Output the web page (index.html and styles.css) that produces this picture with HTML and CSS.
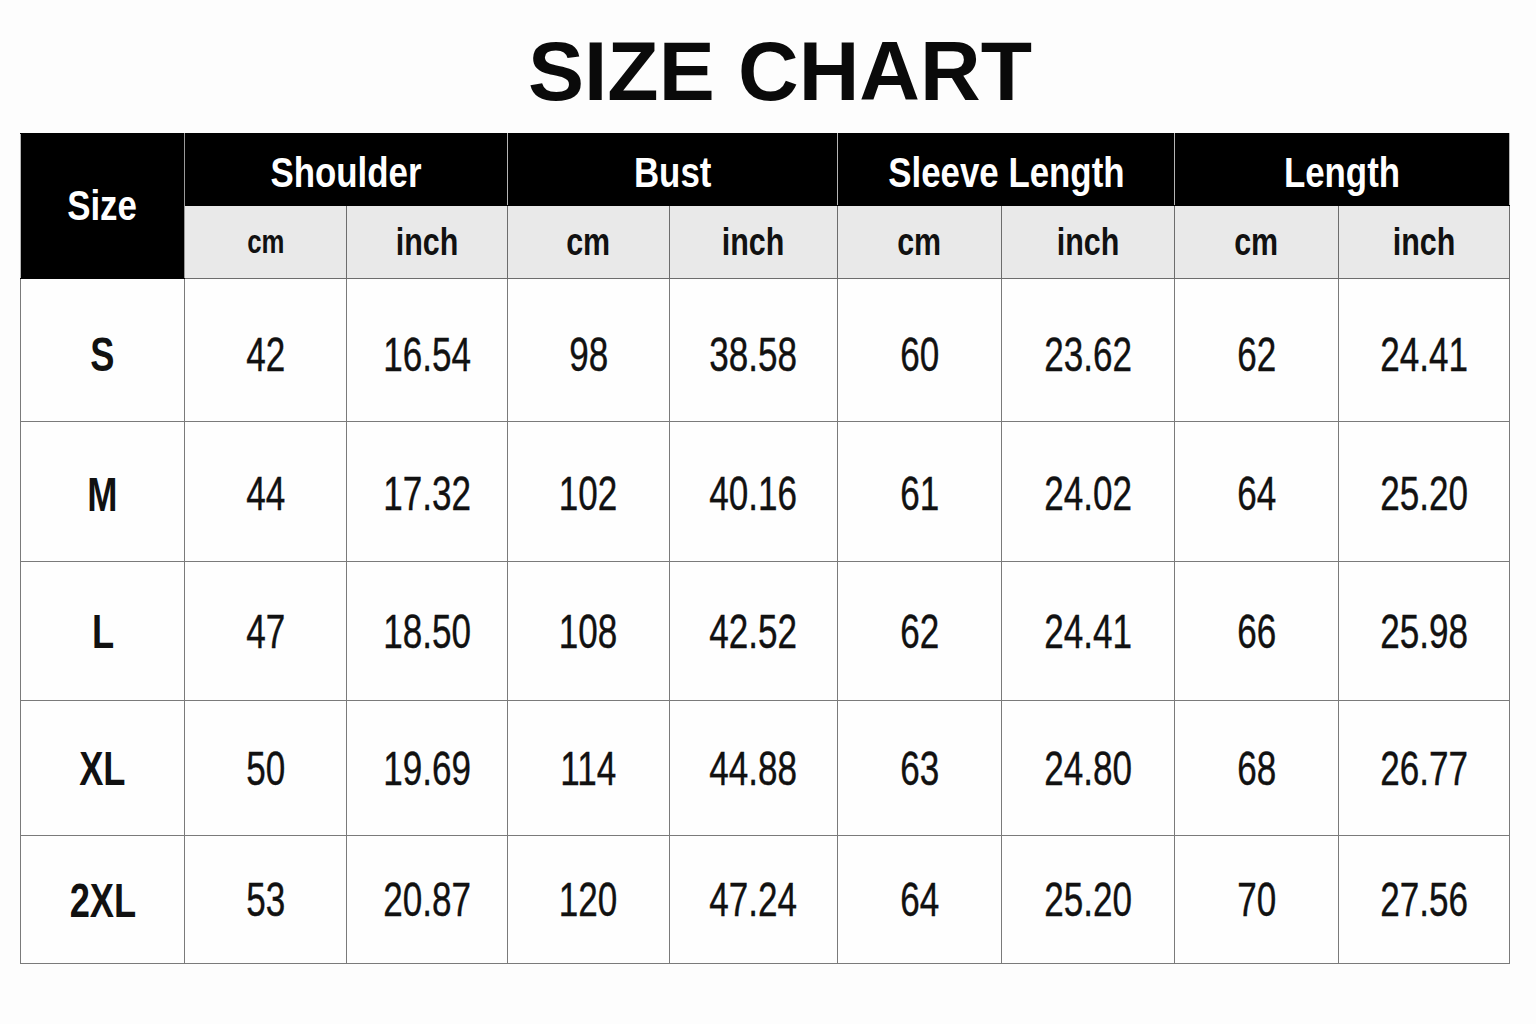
FILE: index.html
```html
<!DOCTYPE html>
<html lang="en">
<head>
<meta charset="utf-8">
<title>Size Chart</title>
<link rel="stylesheet" href="styles.css">
</head>
<body>
<h1 class="title">SIZE CHART</h1>
<table class="chart">
  <colgroup>
    <col class="c164"><col class="c162"><col class="c161"><col class="c162"><col class="c168"><col class="c164"><col class="c173"><col class="c164"><col class="c171">
  </colgroup>
  <thead>
    <tr class="h1">
      <th class="size-head" rowspan="2"><span class="sq hq">Size</span></th>
      <th colspan="2"><span class="sq hq">Shoulder</span></th>
      <th colspan="2"><span class="sq hq">Bust</span></th>
      <th colspan="2"><span class="sq hq">Sleeve Length</span></th>
      <th colspan="2"><span class="sq hq">Length</span></th>
    </tr>
    <tr class="h2">
      <th><span class="sq uq small">cm</span></th><th><span class="sq uq">inch</span></th>
      <th><span class="sq uq">cm</span></th><th><span class="sq uq">inch</span></th>
      <th><span class="sq uq">cm</span></th><th><span class="sq uq">inch</span></th>
      <th><span class="sq uq">cm</span></th><th><span class="sq uq">inch</span></th>
    </tr>
  </thead>
  <tbody>
    <tr class="r1">
      <th><span class="sq lq">S</span></th>
      <td><span class="sq dq">42</span></td><td><span class="sq dq">16.54</span></td>
      <td><span class="sq dq">98</span></td><td><span class="sq dq">38.58</span></td>
      <td><span class="sq dq">60</span></td><td><span class="sq dq">23.62</span></td>
      <td><span class="sq dq">62</span></td><td><span class="sq dq">24.41</span></td>
    </tr>
    <tr class="r2">
      <th><span class="sq lq">M</span></th>
      <td><span class="sq dq">44</span></td><td><span class="sq dq">17.32</span></td>
      <td><span class="sq dq">102</span></td><td><span class="sq dq">40.16</span></td>
      <td><span class="sq dq">61</span></td><td><span class="sq dq">24.02</span></td>
      <td><span class="sq dq">64</span></td><td><span class="sq dq">25.20</span></td>
    </tr>
    <tr class="r3">
      <th><span class="sq lq">L</span></th>
      <td><span class="sq dq">47</span></td><td><span class="sq dq">18.50</span></td>
      <td><span class="sq dq">108</span></td><td><span class="sq dq">42.52</span></td>
      <td><span class="sq dq">62</span></td><td><span class="sq dq">24.41</span></td>
      <td><span class="sq dq">66</span></td><td><span class="sq dq">25.98</span></td>
    </tr>
    <tr class="r4">
      <th><span class="sq lq">XL</span></th>
      <td><span class="sq dq">50</span></td><td><span class="sq dq">19.69</span></td>
      <td><span class="sq dq">114</span></td><td><span class="sq dq">44.88</span></td>
      <td><span class="sq dq">63</span></td><td><span class="sq dq">24.80</span></td>
      <td><span class="sq dq">68</span></td><td><span class="sq dq">26.77</span></td>
    </tr>
    <tr class="r5">
      <th><span class="sq lq">2XL</span></th>
      <td><span class="sq dq">53</span></td><td><span class="sq dq">20.87</span></td>
      <td><span class="sq dq">120</span></td><td><span class="sq dq">47.24</span></td>
      <td><span class="sq dq">64</span></td><td><span class="sq dq">25.20</span></td>
      <td><span class="sq dq">70</span></td><td><span class="sq dq">27.56</span></td>
    </tr>
  </tbody>
</table>
</body>
</html>
```

FILE: styles.css
```css
html, body {
  margin: 0;
  padding: 0;
  background: #fdfdfd;
}
body {
  font-family: "Liberation Sans", Arial, sans-serif;
  color: #111;
  width: 1536px;
  height: 1024px;
  overflow: hidden;
}
.title {
  margin: 29px 0 20px 0;
  padding-left: 24px;
  font-size: 84px;
  line-height: 84px;
  font-weight: 700;
  text-align: center;
  color: #0a0a0a;
}
.chart {
  margin-left: 20px;
  width: 1489px;
  table-layout: fixed;
  border-collapse: collapse;
}
.c164 { width: 164px; }
.c162 { width: 162px; }
.c161 { width: 161px; }
.c168 { width: 168px; }
.c173 { width: 173px; }
.c171 { width: 171px; }

.chart th, .chart td {
  box-sizing: border-box;
  padding: 0;
  text-align: center;
  vertical-align: middle;
  border: 1px solid #7a7a7a;
}
.sq {
  display: inline-block;
  white-space: nowrap;
}
.h1 th {
  height: 72px;
  background: #000;
  color: #fff;
  border-color: #000 #b5b5b5 #000 #b5b5b5;
  padding-top: 6px;
}
.h1 th.size-head {
  border-right-color: #9a9a9a;
  padding-top: 0;
}
.hq {
  font-size: 42px;
  font-weight: 700;
  transform: scaleX(0.83);
}
.h2 th {
  height: 73px;
  background: #e9e9e9;
  color: #111;
  border-color: #6d6d6d;
  border-top-color: #000;
}
.uq {
  font-size: 39px;
  font-weight: 700;
  transform: scaleX(0.78);
}
.uq.small {
  font-size: 33px;
}
.chart tbody th, .chart tbody td {
  background: #fefefe;
}
.lq {
  font-size: 49px;
  font-weight: 700;
  transform: scaleX(0.74);
}
.dq {
  font-size: 48px;
  font-weight: 400;
  transform: scaleX(0.73);
  -webkit-text-stroke: 0.4px #111;
}
.r1 th, .r1 td { height: 143px; padding-top: 8px; }
.r2 th, .r2 td { height: 140px; padding-top: 4px; }
.r3 th, .r3 td { height: 139px; }
.r4 th, .r4 td { height: 135px; }
.r5 th, .r5 td { height: 128px; }
```
